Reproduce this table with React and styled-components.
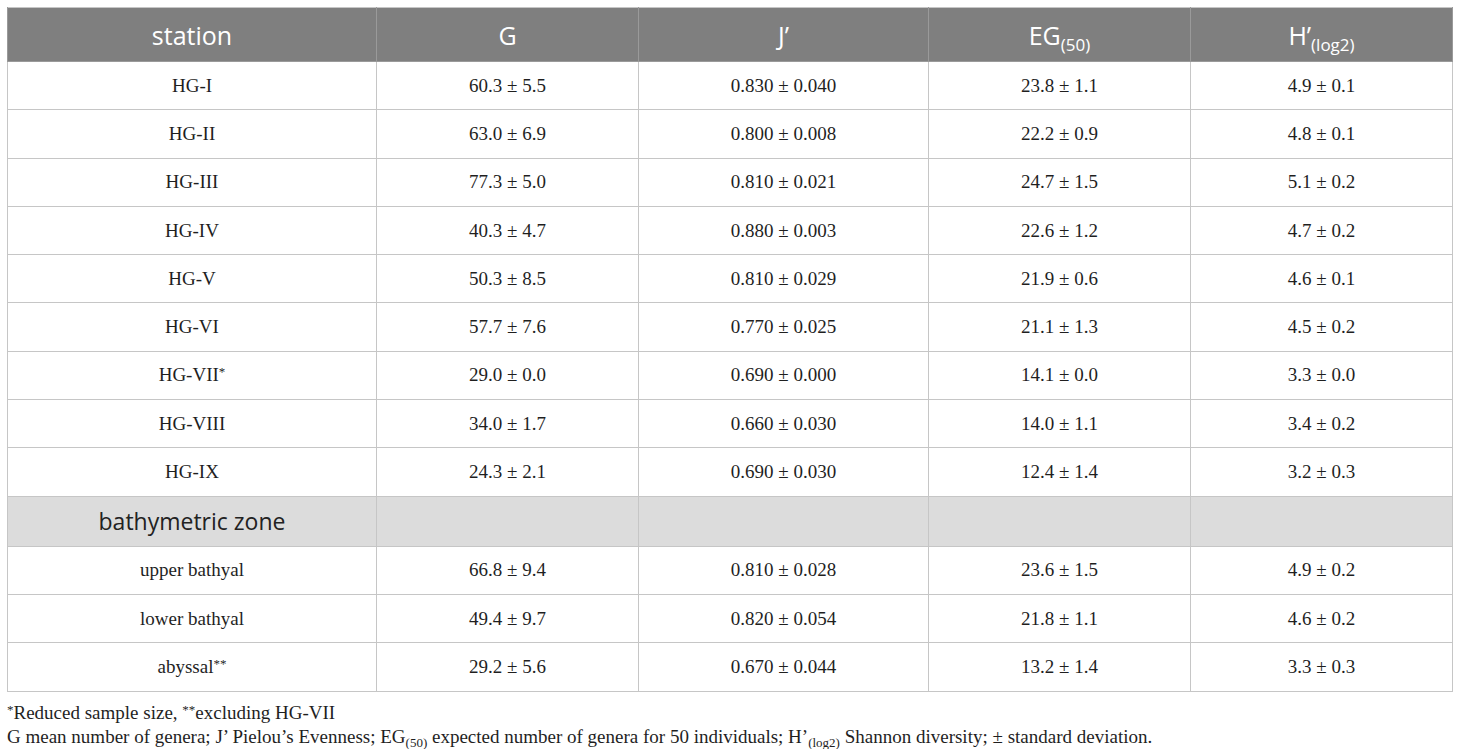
import React from 'react';
import styled, {createGlobalStyle} from 'styled-components';

const GlobalStyle = createGlobalStyle`
  body {
    margin: 0;
    background: #fff;
  }
`;

const Page = styled.div({
  padding: '7px 8px 0 7px',
});

const Table = styled.table({
  borderCollapse: 'collapse',
  tableLayout: 'fixed',
  width: 1445,
  border: '1px solid #c6c6c6',
});

const HeadCell = styled.th({
  background: '#7f7f7f',
  color: '#fff',
  fontFamily: '"Open Sans", sans-serif',
  fontWeight: 400,
  fontSize: 25,
  height: 53,
  padding: 0,
  textAlign: 'center',
  border: '1px solid #9a9a9a',
  borderTop: 'none',
  '& sub': {
    fontSize: 17,
    verticalAlign: -6,
    lineHeight: 0,
  },
});

const Row = styled.tr(({zone}) => ({
  height: zone ? 50 : 48.3,
  background: zone ? '#dcdcdc' : '#fff',
}));

const Cell = styled.td(({zone}) => ({
  border: '1px solid #c6c6c6',
  padding: 0,
  textAlign: 'center',
  color: zone ? '#222' : '#1f1f1f',
  fontFamily: zone ? '"Open Sans", sans-serif' : '"Liberation Serif", serif',
  fontSize: zone ? 23 : 19,
  '& sup': {
    fontSize: 13,
    verticalAlign: 5,
    lineHeight: 0,
  },
}));

const Notes = styled.div({
  marginTop: 9,
  fontFamily: '"Liberation Serif", serif',
  fontSize: 19,
  lineHeight: '24px',
  color: '#1f1f1f',
  '& sup': {
    fontSize: 13,
    verticalAlign: 5,
    lineHeight: 0,
  },
  '& sub': {
    fontSize: 13,
    verticalAlign: -4,
    lineHeight: 0,
  },
});

const widths = [369, 262, 290, 262, 262];

const stations = [
  ['HG-I', '60.3 ± 5.5', '0.830 ± 0.040', '23.8 ± 1.1', '4.9 ± 0.1'],
  ['HG-II', '63.0 ± 6.9', '0.800 ± 0.008', '22.2 ± 0.9', '4.8 ± 0.1'],
  ['HG-III', '77.3 ± 5.0', '0.810 ± 0.021', '24.7 ± 1.5', '5.1 ± 0.2'],
  ['HG-IV', '40.3 ± 4.7', '0.880 ± 0.003', '22.6 ± 1.2', '4.7 ± 0.2'],
  ['HG-V', '50.3 ± 8.5', '0.810 ± 0.029', '21.9 ± 0.6', '4.6 ± 0.1'],
  ['HG-VI', '57.7 ± 7.6', '0.770 ± 0.025', '21.1 ± 1.3', '4.5 ± 0.2'],
  ['HG-VII', '29.0 ± 0.0', '0.690 ± 0.000', '14.1 ± 0.0', '3.3 ± 0.0', '*'],
  ['HG-VIII', '34.0 ± 1.7', '0.660 ± 0.030', '14.0 ± 1.1', '3.4 ± 0.2'],
  ['HG-IX', '24.3 ± 2.1', '0.690 ± 0.030', '12.4 ± 1.4', '3.2 ± 0.3'],
];

const zones = [
  ['upper bathyal', '66.8 ± 9.4', '0.810 ± 0.028', '23.6 ± 1.5', '4.9 ± 0.2'],
  ['lower bathyal', '49.4 ± 9.7', '0.820 ± 0.054', '21.8 ± 1.1', '4.6 ± 0.2'],
  ['abyssal', '29.2 ± 5.6', '0.670 ± 0.044', '13.2 ± 1.4', '3.3 ± 0.3', '**'],
];

function DataRow({row}) {
  const [name, g, j, eg, h, mark] = row;
  return (
    <Row>
      <Cell>{name}{mark && <sup>{mark}</sup>}</Cell>
      <Cell>{g}</Cell>
      <Cell>{j}</Cell>
      <Cell>{eg}</Cell>
      <Cell>{h}</Cell>
    </Row>
  );
}

export default function App() {
  return (
    <Page>
      <GlobalStyle />
      <Table>
        <colgroup>
          {widths.map((w, i) => <col key={i} style={{width: w}} />)}
        </colgroup>
        <thead>
          <tr>
            <HeadCell>station</HeadCell>
            <HeadCell>G</HeadCell>
            <HeadCell>J’</HeadCell>
            <HeadCell>EG<sub>(50)</sub></HeadCell>
            <HeadCell>H’<sub>(log2)</sub></HeadCell>
          </tr>
        </thead>
        <tbody>
          {stations.map(r => <DataRow key={r[0]} row={r} />)}
          <Row zone>
            <Cell zone>bathymetric zone</Cell>
            <Cell zone />
            <Cell zone />
            <Cell zone />
            <Cell zone />
          </Row>
          {zones.map(r => <DataRow key={r[0]} row={r} />)}
        </tbody>
      </Table>
      <Notes>
        <div><sup>*</sup>Reduced sample size, <sup>**</sup>excluding HG-VII</div>
        <div>
          G mean number of genera; J’ Pielou’s Evenness; EG<sub>(50)</sub> expected number of genera for 50 individuals; H’<sub>(log2)</sub> Shannon diversity; ± standard deviation.
        </div>
      </Notes>
    </Page>
  );
}
